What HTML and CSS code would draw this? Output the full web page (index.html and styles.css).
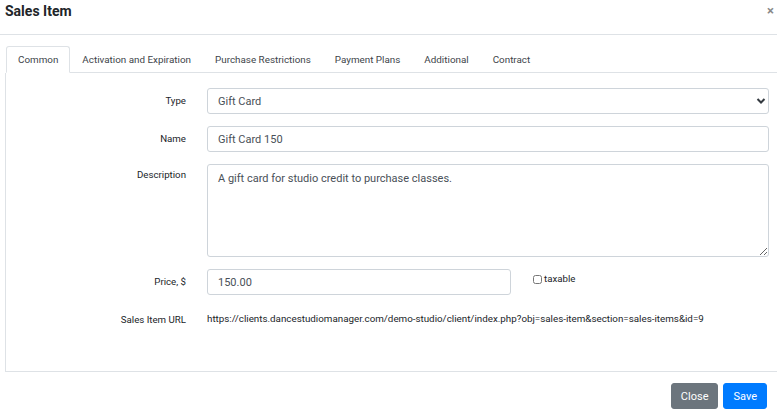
FILE: index.html
```html
<!DOCTYPE html>
<html lang="en">
<head>
    <meta charset="UTF-8">
    <title>Sales Item</title>
    <link rel="stylesheet" href="styles.css">
</head>
<body>
<div class="modal">
    <div class="modal-header">
        <h5 class="modal-title">Sales Item</h5>
        <span class="close">&times;</span>
    </div>
    <div class="modal-body">
        <ul class="tabs">
            <li class="tab-active">Common</li>
            <li>Activation and Expiration</li>
            <li>Purchase Restrictions</li>
            <li>Payment Plans</li>
            <li>Additional</li>
            <li>Contract</li>
        </ul>
        <div class="tab-panel">
            <form class="form-grid">
                <label class="form-label">Type</label>
                <div class="select-wrap">
                    <select class="form-control">
                        <option>Gift Card</option>
                    </select>
                    <svg class="select-arrow" width="10" height="8" viewBox="0 0 10 8">
                        <path d="M1.5 2 L5 5.5 L8.5 2" fill="none" stroke="#343a40" stroke-width="2"/>
                    </svg>
                </div>

                <label class="form-label">Name</label>
                <input class="form-control" type="text" value="Gift Card 150">

                <label class="form-label label-top">Description</label>
                <textarea class="form-control form-area">A gift card for studio credit to purchase classes.</textarea>

                <label class="form-label">Price, $</label>
                <div class="price-row">
                    <input class="form-control price-input" type="text" value="150.00">
                    <label class="check-label"><input type="checkbox" class="check">taxable</label>
                </div>

                <label class="form-label">Sales Item URL</label>
                <div class="url-text">https://clients.dancestudiomanager.com/demo-studio/client/index.php?obj=sales-item&amp;section=sales-items&amp;id=9</div>
            </form>
        </div>
    </div>
    <div class="modal-footer">
        <button class="btn btn-secondary">Close</button>
        <button class="btn btn-primary">Save</button>
    </div>
</div>
</body>
</html>
```

FILE: styles.css
```css
*{
    margin: 0;
    padding: 0;
    box-sizing: border-box;
}
body{
    font-family: Roboto, "Liberation Sans", Arial, sans-serif;
    color: #212529;
    background: #fff;
    overflow: hidden;
}
.modal{
    width: 100%;
}
.modal-header{
    display: flex;
    justify-content: space-between;
    align-items: flex-start;
    height: 35px;
    padding: 0 3px 0 5px;
    border-bottom: 1px solid #dee2e6;
}
.modal-title{
    font-size: 14px;
    font-weight: 700;
    line-height: 22px;
    color: #212529;
}
.close{
    font-size: 13px;
    font-weight: 700;
    line-height: 21px;
    color: #888;
}
.modal-body{
    padding: 11px 0 0 6px;
}
.tabs{
    display: flex;
    list-style: none;
    border-bottom: 1px solid #dee2e6;
}
.tabs li{
    font-size: 9.85px;
    line-height: 25px;
    padding: 0 11px;
    color: #3d4449;
    border: 1px solid transparent;
    border-radius: 3px 3px 0 0;
    margin-bottom: -1px;
}
.tabs .tab-active{
    border-color: #dee2e6 #dee2e6 #fff;
    background: #fff;
}
.tab-panel{
    border: 1px solid #dee2e6;
    border-top: 0;
    border-right: 0;
    margin-left: -1px;
    padding: 15px 0 44px;
}
.form-grid{
    display: grid;
    grid-template-columns: 180px 562px;
    column-gap: 21px;
    row-gap: 12px;
}
.form-label{
    font-size: 9.7px;
    line-height: 14px;
    padding-top: 6px;
    text-align: right;
}
.form-label.label-top{
    padding-top: 4px;
}
.form-control{
    display: block;
    width: 100%;
    height: 26px;
    padding: 0 10px;
    font-family: inherit;
    font-size: 11px;
    color: #495057;
    background: #fff;
    border: 1px solid #ced4da;
    border-radius: 3px;
    outline: none;
}
.select-wrap{
    position: relative;
}
.select-wrap select{
    appearance: none;
    -webkit-appearance: none;
}
.select-arrow{
    position: absolute;
    right: 3px;
    top: 9px;
}
.form-area{
    height: 93px;
    padding: 6px 10px;
    line-height: 15px;
    resize: vertical;
}
.price-row{
    display: flex;
    align-items: flex-start;
}
.price-input{
    width: 304px;
}
.check-label{
    display: flex;
    align-items: center;
    margin: 3px 0 0 22px;
    font-size: 9.7px;
    line-height: 14px;
}
.check{
    width: 9px;
    height: 9px;
    margin: 0 2px 0 0;
}
.url-text{
    font-size: 9.8px;
    line-height: 14px;
    padding-top: 5px;
    white-space: nowrap;
}
.modal-footer{
    display: flex;
    justify-content: flex-end;
    gap: 5px;
    padding: 11px 10px 0 0;
}
.btn{
    height: 26px;
    padding: 0 9px;
    font-family: inherit;
    font-size: 11px;
    color: #fff;
    border: 1px solid transparent;
    border-radius: 3px;
}
.btn-secondary{
    background: #6c757d;
    border-color: #6c757d;
}
.btn-primary{
    background: #007bff;
    border-color: #007bff;
}
```
